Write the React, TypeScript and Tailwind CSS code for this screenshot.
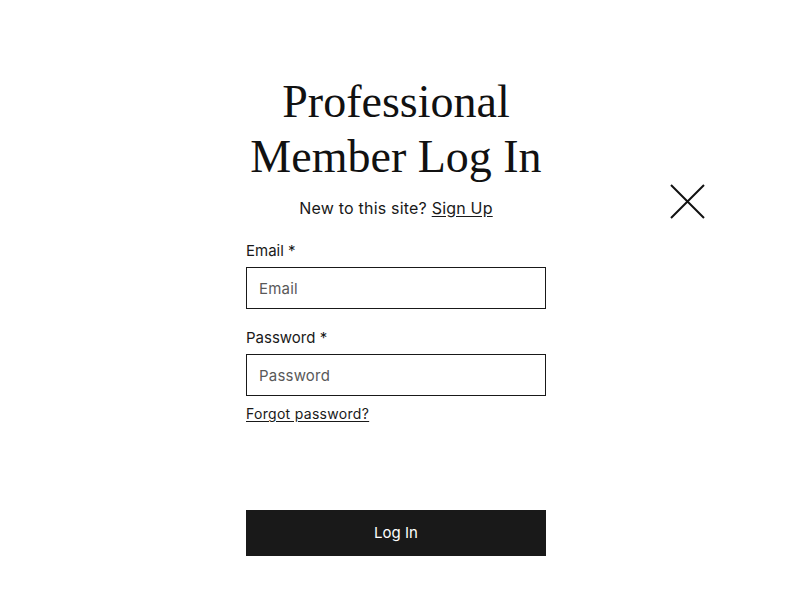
import { useState } from 'react';

const sans = { fontFamily: 'Inter, "Liberation Sans", sans-serif' };

const Field = ({ label, placeholder, type }: { label: string; placeholder: string; type: string }) => {
  const [value, setValue] = useState('');
  return (
    <div className="flex flex-col">
      <label className="text-[15px] leading-[20px] text-[#191919] mb-[6px]">{label} *</label>
      <input
        type={type}
        value={value}
        onChange={(e) => setValue(e.target.value)}
        placeholder={placeholder}
        className="h-[42px] w-full border border-[#191919] px-[12px] text-[15px] tracking-[0.2px] text-[#191919] placeholder:text-[#595959] outline-none"
      />
    </div>
  );
};

const App = () => {
  return (
    <div className="relative min-h-[600px] w-[800px] bg-white text-[#191919]" style={sans}>
      <button className="absolute left-[670px] top-[184px] h-[35px] w-[35px]" aria-label="Close">
        <svg viewBox="0 0 35 35" width="35" height="35" fill="none" stroke="#111" strokeWidth="2">
          <path d="M1 1 L34 34 M34 1 L1 34" />
        </svg>
      </button>

      <div className="ml-[246px] flex w-[300px] flex-col pt-[74px]">
        <h1
          className="text-center text-[46px] leading-[55px] text-[#111]"
          style={{ fontFamily: '"Liberation Serif", "DejaVu Serif", serif' }}
        >
          Professional
          <br />
          Member Log In
        </h1>
        <p className="mt-[13px] text-center text-[16px] leading-[22px] tracking-[0.2px]">
          New to this site? <a className="underline underline-offset-2" href="#">Sign Up</a>
        </p>

        <div className="mt-[22px] flex flex-col gap-[19px]">
          <Field label="Email" placeholder="Email" type="email" />
          <Field label="Password" placeholder="Password" type="password" />
        </div>
        <a href="#" className="mt-[8px] self-start text-[14px] leading-[20px] tracking-[0.3px] underline underline-offset-2">
          Forgot password?
        </a>

        <button className="mt-[86px] h-[46px] w-full bg-[#191919] text-[15px] text-white">Log In</button>
      </div>
    </div>
  );
};

export default App;
